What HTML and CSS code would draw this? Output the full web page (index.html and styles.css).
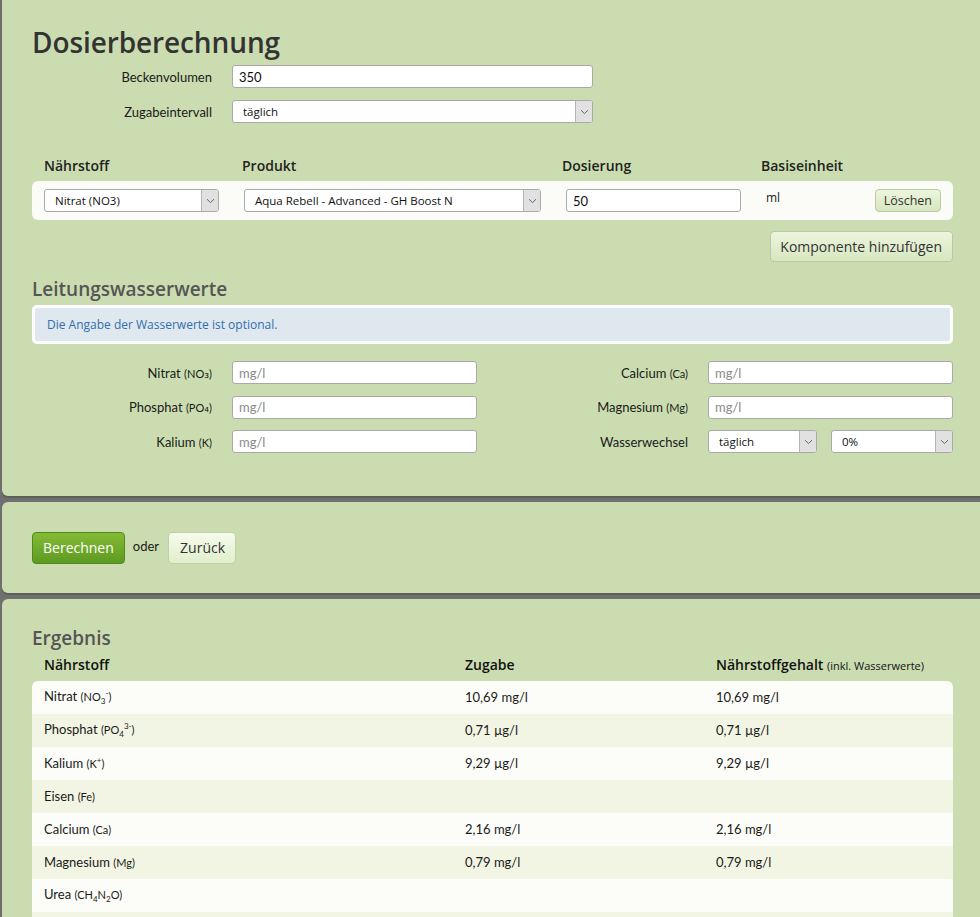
FILE: index.html
```html
<!DOCTYPE html>
<html lang="de">
<head>
<meta charset="utf-8">
<title>Dosierberechnung</title>
<link rel="stylesheet" href="styles.css">
</head>
<body>
<div class="page">
  <section class="panel panel-form">
    <h1 class="title">Dosierberechnung</h1>
    <div class="form-row">
      <label class="lbl">Beckenvolumen</label>
      <input class="inp inp-wide" type="text" value="350">
    </div>
    <div class="form-row">
      <label class="lbl">Zugabeintervall</label>
      <div class="sel sel-wide"><span class="sel-text">täglich</span><span class="sel-arrow"><svg width="9" height="6" viewBox="0 0 9 6"><path d="M1 1.2 L4.5 4.6 L8 1.2" fill="none" stroke="#666" stroke-width="1"/></svg></span></div>
    </div>

    <div class="comp-head">
      <span>Nährstoff</span><span>Produkt</span><span>Dosierung</span><span>Basiseinheit</span>
    </div>
    <div class="comp-row">
      <div class="sel sel-n"><span class="sel-text">Nitrat (NO3)</span><span class="sel-arrow"><svg width="9" height="6" viewBox="0 0 9 6"><path d="M1 1.2 L4.5 4.6 L8 1.2" fill="none" stroke="#666" stroke-width="1"/></svg></span></div>
      <div class="sel sel-p"><span class="sel-text">Aqua Rebell - Advanced - GH Boost N</span><span class="sel-arrow"><svg width="9" height="6" viewBox="0 0 9 6"><path d="M1 1.2 L4.5 4.6 L8 1.2" fill="none" stroke="#666" stroke-width="1"/></svg></span></div>
      <input class="inp inp-dose" type="text" value="50">
      <span class="unit">ml</span>
      <button class="btn btn-light btn-small">Löschen</button>
    </div>
    <div class="add-wrap">
      <button class="btn btn-light btn-add">Komponente hinzufügen</button>
    </div>

    <h2 class="sub">Leitungswasserwerte</h2>
    <div class="info">Die Angabe der Wasserwerte ist optional.</div>

    <div class="water">
      <div class="form-row">
        <label class="lbl">Nitrat <small>(NO<span class="chem">₃</span>)</small></label>
        <input class="inp inp-half" type="text" placeholder="mg/l">
      </div>
      <div class="form-row">
        <label class="lbl">Calcium <small>(Ca)</small></label>
        <input class="inp inp-half" type="text" placeholder="mg/l">
      </div>
      <div class="form-row">
        <label class="lbl">Phosphat <small>(PO<span class="chem">₄</span>)</small></label>
        <input class="inp inp-half" type="text" placeholder="mg/l">
      </div>
      <div class="form-row">
        <label class="lbl">Magnesium <small>(Mg)</small></label>
        <input class="inp inp-half" type="text" placeholder="mg/l">
      </div>
      <div class="form-row">
        <label class="lbl">Kalium <small>(K)</small></label>
        <input class="inp inp-half" type="text" placeholder="mg/l">
      </div>
      <div class="form-row">
        <label class="lbl">Wasserwechsel</label>
        <div class="pair">
          <div class="sel sel-ww"><span class="sel-text">täglich</span><span class="sel-arrow"><svg width="9" height="6" viewBox="0 0 9 6"><path d="M1 1.2 L4.5 4.6 L8 1.2" fill="none" stroke="#666" stroke-width="1"/></svg></span></div>
          <div class="sel sel-pct"><span class="sel-text">0%</span><span class="sel-arrow"><svg width="9" height="6" viewBox="0 0 9 6"><path d="M1 1.2 L4.5 4.6 L8 1.2" fill="none" stroke="#666" stroke-width="1"/></svg></span></div>
        </div>
      </div>
    </div>
  </section>

  <section class="panel panel-actions">
    <button class="btn btn-green">Berechnen</button>
    <span class="oder">oder</span>
    <button class="btn btn-back">Zurück</button>
  </section>

  <section class="panel panel-result">
    <h2 class="sub">Ergebnis</h2>
    <div class="res-head">
      <span>Nährstoff</span><span>Zugabe</span><span>Nährstoffgehalt <small>(inkl. Wasserwerte)</small></span>
    </div>
    <div class="res-table">
      <div class="res-row"><span>Nitrat <small>(NO<sub>3</sub><sup>-</sup>)</small></span><span>10,69 mg/l</span><span>10,69 mg/l</span></div>
      <div class="res-row"><span>Phosphat <small>(PO<sub>4</sub><sup>3-</sup>)</small></span><span>0,71 µg/l</span><span>0,71 µg/l</span></div>
      <div class="res-row"><span>Kalium <small>(K<sup>+</sup>)</small></span><span>9,29 µg/l</span><span>9,29 µg/l</span></div>
      <div class="res-row"><span>Eisen <small>(Fe)</small></span><span></span><span></span></div>
      <div class="res-row"><span>Calcium <small>(Ca)</small></span><span>2,16 mg/l</span><span>2,16 mg/l</span></div>
      <div class="res-row"><span>Magnesium <small>(Mg)</small></span><span>0,79 mg/l</span><span>0,79 mg/l</span></div>
      <div class="res-row"><span>Urea <small>(CH<sub>4</sub>N<sub>2</sub>O)</small></span><span></span><span></span></div>
      <div class="res-row"><span>&nbsp;</span><span></span><span></span></div>
    </div>
  </section>
</div>
</body>
</html>
```

FILE: styles.css
```css
html, body {
  margin: 0;
  padding: 0;
  overflow: hidden;
}
body {
  background: #6f6f6f;
  font-family: Lato, "Open Sans", sans-serif;
  font-size: 13px;
  color: #1a1a1a;
}
.page {
  display: flex;
  flex-direction: column;
  gap: 6px;
  padding-left: 2px;
  margin-right: -30px;
}
.panel {
  background: #cbddb0;
  border-radius: 6px;
  padding: 0 57px 0 30px;
  box-shadow: 0 2px 0 #5c5f58;
}
.panel-form {
  margin-top: -10px;
  padding-top: 40px;
  padding-bottom: 31px;
  border-top-left-radius: 0;
}
.title {
  font-family: "Open Sans", sans-serif;
  font-weight: 600;
  font-size: 28px;
  color: #333;
  margin: 0 0 11px 0;
  line-height: 24px;
  letter-spacing: -0.1px;
}
.form-row {
  display: flex;
  align-items: center;
  gap: 20px;
  margin-bottom: 12px;
}
.lbl {
  width: 180px;
  text-align: right;
  color: #1a1a1a;
  font-size: 13px;
}
.lbl small {
  font-size: 11px;
}
.chem {
  font-family: "DejaVu Sans", sans-serif;
  font-size: 12px;
}
.inp {
  box-sizing: border-box;
  height: 23px;
  border: 1px solid #a9a9a9;
  border-radius: 3px;
  background: #fff;
  font-family: Lato, "Open Sans", sans-serif;
  font-size: 13px;
  padding: 0 6px;
  color: #111;
  outline: none;
}
.inp::placeholder {
  color: #8a8a8a;
}
.inp-wide { width: 361px; }
.inp-half { width: 245px; }
.inp-dose { width: 175px; }

.sel {
  box-sizing: border-box;
  height: 23px;
  display: flex;
  align-items: stretch;
  border: 1px solid #a9a9a9;
  border-radius: 3px;
  background: #fff;
  overflow: hidden;
}
.sel-text {
  flex: 1;
  display: flex;
  align-items: center;
  padding-left: 10px;
  font-family: "Open Sans", sans-serif;
  font-size: 11.5px;
  color: #111;
  white-space: nowrap;
}
.sel-arrow {
  width: 16px;
  background: #e1e1e1;
  border-left: 1px solid #b5b5b5;
  display: flex;
  align-items: center;
  justify-content: center;
}
.sel-wide { width: 361px; }
.sel-n { width: 175px; }
.sel-p { width: 297px; }
.sel-ww { width: 109px; }
.sel-pct { width: 122px; }

.comp-head {
  display: grid;
  grid-template-columns: 198px 320px 199px 1fr;
  padding-left: 12px;
  margin-top: 33px;
  font-family: "Open Sans", sans-serif;
  font-weight: 600;
  font-size: 14px;
  color: #222;
  height: 20px;
  line-height: 20px;
}
.comp-row {
  margin-top: 5px;
  background: #fbfcf7;
  border-radius: 6px;
  height: 39px;
  box-sizing: border-box;
  padding: 0 12px;
  display: flex;
  align-items: center;
  gap: 25px;
}
.unit {
  font-family: "Open Sans", sans-serif;
  font-size: 12px;
  margin-top: -6px;
  flex: 1;
}
.btn {
  font-family: "Open Sans", sans-serif;
  cursor: pointer;
  border-radius: 4px;
  color: #333;
}
.btn-light {
  background: linear-gradient(#ecf5dd, #d7e7c0);
  border: 1px solid #b9c9a2;
}
.btn-small {
  height: 23px;
  padding: 0 8px;
  font-size: 12.5px;
}
.add-wrap {
  display: flex;
  justify-content: flex-end;
  margin-top: 11px;
}
.btn-add {
  height: 31px;
  padding: 0 10px 0 9px;
  font-size: 14px;
}
.sub {
  font-family: "Open Sans", sans-serif;
  font-weight: 600;
  font-size: 19px;
  color: #555;
  margin: 14px 0 0 0;
  line-height: 26px;
}
.info {
  margin-top: 3px;
  box-sizing: border-box;
  height: 39px;
  background: #dfe8ee;
  border: 3px solid #fff;
  border-radius: 5px;
  padding-left: 12px;
  display: flex;
  align-items: center;
  color: #2f6fae;
  font-family: "Open Sans", sans-serif;
  font-size: 12px;
}
.water {
  margin-top: 17px;
  display: grid;
  grid-template-columns: 445px 445px;
  column-gap: 31px;
}
.water .form-row {
  margin-bottom: 11.5px;
}
.pair {
  display: flex;
  gap: 14px;
}

.panel-actions {
  padding-top: 30px;
  padding-bottom: 29px;
  display: flex;
  align-items: center;
}
.btn-green {
  height: 32px;
  padding: 0 10px;
  font-size: 14px;
  color: #fff;
  background: linear-gradient(#84bb35, #5d9a22);
  border: 1px solid #4f8a1e;
}
.oder {
  margin: -4px 9px 0 8px;
  font-size: 13px;
}
.btn-back {
  height: 32px;
  padding: 0 10px 0 11px;
  font-size: 14px;
  background: linear-gradient(#f5fbec, #e1efcc);
  border: 1px solid #bfd0a8;
}

.panel-result {
  padding-top: 26px;
  padding-bottom: 20px;
  border-bottom-left-radius: 0;
}
.panel-result .sub {
  margin: 0;
}
.res-head {
  display: grid;
  grid-template-columns: 421px 251px 1fr;
  padding-left: 12px;
  margin-top: 3px;
  height: 22px;
  line-height: 22px;
  font-family: "Open Sans", sans-serif;
  font-weight: 600;
  font-size: 14px;
  color: #111;
}
.res-head small {
  font-weight: 400;
  font-size: 11px;
}
.res-table {
  margin-top: 5px;
  border-radius: 6px 6px 0 0;
  overflow: hidden;
}
.res-row {
  display: grid;
  grid-template-columns: 421px 251px 1fr;
  padding-left: 12px;
  height: 33px;
  align-items: center;
  background: #fcfdf8;
  font-size: 13px;
}
.res-row:nth-child(even) {
  background: #f2f5e3;
}
.res-row small {
  font-size: 11px;
}
.res-row sub, .res-row sup {
  font-size: 8px;
}
```
